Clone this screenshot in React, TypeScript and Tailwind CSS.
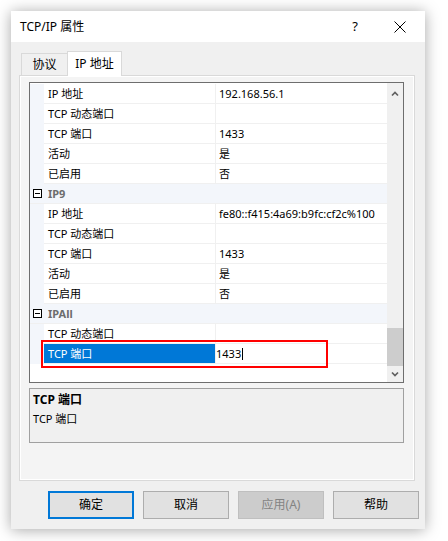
import React from "react";

type Row = { name: string; value?: string; kind?: "category" | "selected" };

const rows: Row[] = [
  { name: "IP 地址", value: "192.168.56.1" },
  { name: "TCP 动态端口", value: "" },
  { name: "TCP 端口", value: "1433" },
  { name: "活动", value: "是" },
  { name: "已启用", value: "否" },
  { name: "IP9", kind: "category" },
  { name: "IP 地址", value: "fe80::f415:4a69:b9fc:cf2c%100" },
  { name: "TCP 动态端口", value: "" },
  { name: "TCP 端口", value: "1433" },
  { name: "活动", value: "是" },
  { name: "已启用", value: "否" },
  { name: "IPAll", kind: "category" },
  { name: "TCP 动态端口", value: "" },
  { name: "TCP 端口", value: "1433", kind: "selected" },
];

function Chevron({ down }: { down?: boolean }) {
  return (
    <svg width="8" height="6" viewBox="0 0 8 6" className="block">
      <polyline
        points={down ? "1,1.5 4,4.5 7,1.5" : "1,4.5 4,1.5 7,4.5"}
        fill="none"
        stroke="#606060"
        strokeWidth="1.7"
      />
    </svg>
  );
}

function GridRow({ row }: { row: Row }) {
  if (row.kind === "category") {
    return (
      <div className="flex h-[20px] items-center border-b border-[#f0f0f0] bg-[#f3f6fb]">
        <div className="flex w-[14px] shrink-0 justify-center">
          <div className="flex h-[9px] w-[9px] items-center justify-center border border-black bg-white">
            <div className="h-px w-[5px] bg-black" />
          </div>
        </div>
        <span className="pl-[4px] text-[11px] font-bold leading-[19px] text-[#6d6d6d]">{row.name}</span>
      </div>
    );
  }

  const selected = row.kind === "selected";

  return (
    <div className="flex h-[20px]">
      <div className="w-[14px] shrink-0 bg-[#f3f6fb]" />
      <div className="flex min-w-0 flex-1 border-b border-[#f0f0f0] bg-white">
        <div
          className={
            selected
              ? "w-[172px] shrink-0 border-r border-[#f0f0f0] bg-[#0078d7] pl-[4px] text-[11px] leading-[19px] text-white"
              : "w-[172px] shrink-0 border-r border-[#f0f0f0] pl-[4px] text-[11px] leading-[19px] text-black"
          }
        >
          {row.name}
        </div>
        {selected ? (
          <div className="flex min-w-0 flex-1 items-center text-[11px] leading-[19px] text-black">
            <span>{row.value}</span>
            <span className="ml-px h-[12px] w-px bg-black" />
          </div>
        ) : (
          <div className="min-w-0 flex-1 overflow-hidden whitespace-nowrap pl-[3px] text-[11px] leading-[19px] text-black">
            {row.value}
          </div>
        )}
      </div>
    </div>
  );
}

export default function App() {
  return (
    <div className="h-[541px] w-[448px] bg-white pl-[11px] pt-[11px] font-['Noto_Sans','Noto_Sans_CJK_SC',sans-serif]">
      <div className="flex h-[518px] w-[414px] flex-col bg-[#f0f0f0] shadow-[0_1px_14px_rgba(0,0,0,0.35)]">
        <div className="flex h-[31px] items-center bg-white pl-[9px] pr-[19px] text-[12px] text-black">
          <span className="flex-1">TCP/IP 属性</span>
          <span className="mr-[36px] text-[13px]">?</span>
          <svg width="12" height="12" viewBox="0 0 12 12">
            <path d="M0.5 0.5 L11.5 11.5 M11.5 0.5 L0.5 11.5" stroke="#000" strokeWidth="1" />
          </svg>
        </div>

        <div className="flex flex-1 flex-col px-[8px] pt-[9px]">
          <div className="flex h-[24px] items-end pl-[2px] text-[12px] text-black">
            <div className="flex h-[22px] w-[46px] items-center justify-center border border-r-0 border-b-0 border-[#d9d9d9]">
              协议
            </div>
            <div className="relative z-10 -mb-px flex h-[25px] w-[55px] items-center justify-center border border-b-0 border-[#d9d9d9] bg-white">
              IP 地址
            </div>
          </div>

          <div className="h-[406px] w-[396px] border border-[#d9d9d9]">
            <div className="flex h-full flex-col border border-white bg-[#f4f4f4] pl-[8px] pr-[8px] pt-[5px]">
              <div className="relative flex h-[301px] w-[375px] border border-[#6e6e6e] bg-white">
                <div className="w-[357px] pt-px">
                  {rows.map((row, i) => (
                    <GridRow key={i} row={row} />
                  ))}
                </div>
                <div className="flex w-[16px] flex-col items-center bg-[#f0f0f0]">
                  <div className="flex h-[17px] items-center justify-center pt-[4px]">
                    <Chevron />
                  </div>
                  <div className="flex-1" />
                  <div className="h-[38px] w-full bg-[#cdcdcd]" />
                  <div className="flex h-[16px] items-center justify-center">
                    <Chevron down />
                  </div>
                </div>
                <div className="absolute left-[11px] top-[257px] h-[28px] w-[287px] border-2 border-[#ff0000]" />
              </div>

              <div className="mt-[5px] h-[55px] w-[375px] border border-[#a0a0a0] bg-[#f0f0f0] pl-[3px] pt-[1px] text-[11px] leading-[19px] text-black">
                <div className="text-[12px] font-bold">TCP 端口</div>
                <div>TCP 端口</div>
              </div>
            </div>
          </div>

          <div className="mt-[10px] flex justify-end gap-[9px] text-[12px]">
            <button className="flex h-[28px] w-[86px] items-center justify-center border-2 border-[#0078d7] bg-[#e1e1e1] text-black">
              确定
            </button>
            <button className="flex h-[28px] w-[86px] items-center justify-center border border-[#adadad] bg-[#e1e1e1] text-black">
              取消
            </button>
            <button className="flex h-[28px] w-[86px] items-center justify-center border border-[#bfbfbf] bg-[#cccccc] text-[#838383]">
              应用(A)
            </button>
            <button className="-mr-[2px] flex h-[28px] w-[86px] items-center justify-center border border-[#adadad] bg-[#e1e1e1] text-black">
              帮助
            </button>
          </div>
        </div>
      </div>
    </div>
  );
}
